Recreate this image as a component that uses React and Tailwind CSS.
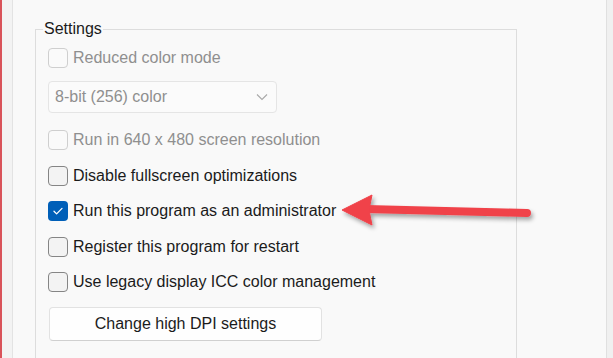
import { useState } from 'react'

const font = { fontFamily: '"Liberation Sans", Arial, sans-serif' }

function CheckRow({ label, checked, disabled, onToggle, className }) {
  // 勾选框 + 文本
  return (
    <label className={`flex items-center gap-[5px] h-5 ${className}`}>
      <span
        onClick={disabled ? undefined : onToggle}
        className={
          checked
            ? 'w-5 h-5 rounded-[4px] bg-[#005fb8] flex items-center justify-center'
            : disabled
            ? 'w-5 h-5 rounded-[4px] border border-[#cfcfcf] bg-[#fafafa]'
            : 'w-5 h-5 rounded-[4px] border border-[#858585] bg-[#f3f3f3]'
        }
      >
        {checked && (
          <svg width="12" height="12" viewBox="0 0 12 12" fill="none">
            <path d="M2 6.3l2.6 2.6L10 3.4" stroke="#ffffff" strokeWidth="1.3" strokeLinecap="round" strokeLinejoin="round" />
          </svg>
        )}
      </span>
      <span className={`text-[16px] leading-5 ${disabled ? 'text-[#8f8f8f]' : 'text-[#1b1b1b]'}`}>
        {label}
      </span>
    </label>
  )
}

export default function App() {
  const [opts, setOpts] = useState({ fullscreen: false, admin: true, restart: false, icc: false })
  const toggle = (k) => setOpts({ ...opts, [k]: !opts[k] })

  return (
    <div className="relative w-[613px] h-[358px] overflow-hidden flex bg-[#f0f0f0]" style={font}>
      {/* 左侧边框 */}
      <div className="w-[2px] bg-[#d9535a]" />
      <div className="w-[11px] bg-[#f3f3f3] border-r border-[#e3e3e3]" />

      {/* 主区 */}
      <div className="w-[594px] bg-[#f9f9f9] border-r border-[#e0e0e0] pl-[22px] pt-[19px]">
        <fieldset className="w-[482px] border border-[#dddddd] pb-10">
          <legend className="ml-[7px] px-[1px] text-[16px] leading-5 text-[#1b1b1b]">Settings</legend>
          <div className="flex flex-col pl-3 pt-[9px]">
            <CheckRow label="Reduced color mode" disabled />

            <div className="mt-[13px] w-[229px] h-8 rounded-[4px] border border-[#e5e5e5] bg-[#fbfbfb] flex items-center justify-between pl-[6px] pr-[8px]">
              <span className="text-[16px] text-[#8f8f8f]">8-bit (256) color</span>
              <svg width="12" height="8" viewBox="0 0 12 8" fill="none">
                <path d="M1 1.5l5 5 5-5" stroke="#a8a8a8" strokeWidth="1.1" />
              </svg>
            </div>

            <CheckRow className="mt-[17px]" label="Run in 640 x 480 screen resolution" disabled />
            <CheckRow className="mt-4" label="Disable fullscreen optimizations" checked={opts.fullscreen} onToggle={() => toggle('fullscreen')} />
            <CheckRow className="mt-[15px]" label="Run this program as an administrator" checked={opts.admin} onToggle={() => toggle('admin')} />
            <CheckRow className="mt-4" label="Register this program for restart" checked={opts.restart} onToggle={() => toggle('restart')} />
            <CheckRow className="mt-[15px]" label="Use legacy display ICC color management" checked={opts.icc} onToggle={() => toggle('icc')} />

            <button className="mt-[15px] ml-[1px] w-[273px] h-[34px] rounded-[4px] border border-[#e2e2e2] border-b-[#d0d0d0] bg-[#fefefe] text-[16px] text-[#1b1b1b]">
              Change high DPI settings
            </button>
          </div>
        </fieldset>
      </div>
      <div className="flex-1 bg-[#f0f0f0]" />

      {/* 红色箭头标注 */}
      <svg className="absolute left-0 top-0 pointer-events-none" width="613" height="358" viewBox="0 0 613 358">
        <defs>
          <filter id="sh" x="-20%" y="-50%" width="140%" height="200%">
            <feDropShadow dx="2" dy="3" stdDeviation="2" floodColor="#000000" floodOpacity="0.35" />
          </filter>
        </defs>
        <g filter="url(#sh)" fill="#f0424a" stroke="#f0424a">
          <line x1="366" y1="209" x2="527" y2="213" strokeWidth="8" strokeLinecap="round" />
          <polygon points="342,210 372,195 369,210 372,225" strokeWidth="1" strokeLinejoin="round" />
        </g>
      </svg>
    </div>
  )
}
